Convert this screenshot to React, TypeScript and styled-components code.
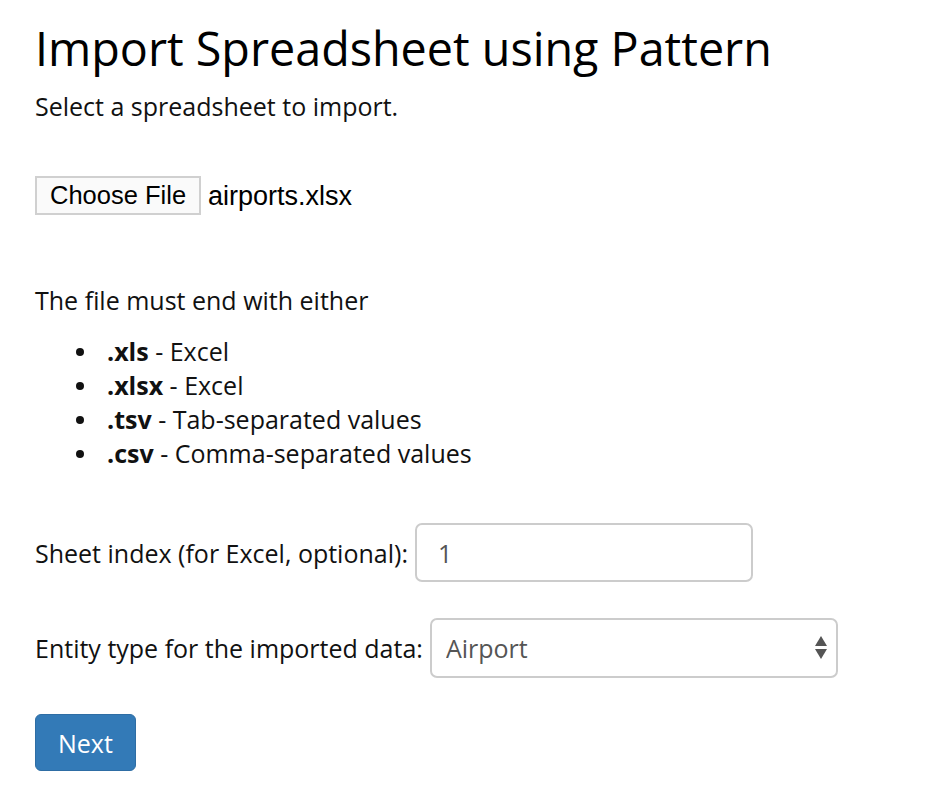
import styled, { createGlobalStyle } from 'styled-components';

const GlobalStyle = createGlobalStyle`
  html, body {
    margin: 0;
    padding: 0;
    background: #fff;
  }
  body {
    font-family: "Open Sans", "Noto Sans", sans-serif;
    font-size: 25px;
    line-height: 34px;
    color: #111;
  }
`;

const extensions = [
  { ext: '.xls', label: 'Excel' },
  { ext: '.xlsx', label: 'Excel' },
  { ext: '.tsv', label: 'Tab-separated values' },
  { ext: '.csv', label: 'Comma-separated values' },
];

const App = () => {
  return (
    <Page>
      <GlobalStyle />
      <Title>Import Spreadsheet using Pattern</Title>
      <Lead>Select a spreadsheet to import.</Lead>

      <FilePicker>
        <ChooseButton type="button">Choose File</ChooseButton>
        <FileName>airports.xlsx</FileName>
      </FilePicker>

      <Lead>The file must end with either</Lead>
      <ExtList>
        {extensions.map((item) => (
          <li key={item.ext}>
            <b>{item.ext}</b> - {item.label}
          </li>
        ))}
      </ExtList>

      <FormRow>
        <Label htmlFor="sheet">Sheet index (for Excel, optional):</Label>
        <TextInput id="sheet" defaultValue="1" />
      </FormRow>

      <FormRow>
        <Label htmlFor="entity">Entity type for the imported data:</Label>
        <SelectWrap>
          <Select id="entity" defaultValue="Airport">
            <option>Airport</option>
          </Select>
          <Arrows viewBox="0 0 12 24" aria-hidden="true">
            <path d="M6 0 L12 10 L0 10 Z" />
            <path d="M0 13 L12 13 L6 23 Z" />
          </Arrows>
        </SelectWrap>
      </FormRow>

      <PrimaryButton type="button">Next</PrimaryButton>
    </Page>
  );
};

const Page = styled.div`
  padding: 23px 35px 40px;
`;

const Title = styled.h1`
  margin: 0 0 16px;
  font-size: 46.7px;
  line-height: 50px;
  font-weight: 400;
  color: #000;
`;

const Lead = styled.p`
  margin: 0 0 17px;
`;

const FilePicker = styled.div`
  display: flex;
  align-items: center;
  gap: 7px;
  margin: 53px 0 68px;
`;

const ChooseButton = styled.button`
  font-family: "Liberation Sans", Arial, sans-serif;
  font-size: 25.5px;
  height: 39px;
  padding: 0 13px;
  color: #000;
  background: #fafafa;
  border: 2px solid #d0d0d0;
  border-radius: 0;
`;

const FileName = styled.span`
  font-family: "Liberation Sans", Arial, sans-serif;
  font-size: 27px;
  color: #000;
`;

const ExtList = styled.ul`
  margin: 0 0 53px;
  padding-left: 72px;
  list-style: none;
  li {
    position: relative;
  }
  li::before {
    content: "";
    position: absolute;
    left: -31px;
    top: 14px;
    width: 8px;
    height: 8px;
    border-radius: 50%;
    background: #111;
  }
  b {
    font-weight: 700;
  }
`;

const FormRow = styled.div`
  display: flex;
  align-items: center;
  gap: 7px;
  margin-bottom: 36px;
`;

const Label = styled.label`
  font-weight: 400;
`;

const TextInput = styled.input`
  box-sizing: border-box;
  width: 338px;
  height: 59px;
  padding: 0 21px;
  font-family: "Open Sans", sans-serif;
  font-size: 25px;
  color: #555;
  background: #fff;
  border: 2px solid #ccc;
  border-radius: 7px;
  outline: none;
`;

const SelectWrap = styled.div`
  position: relative;
  width: 408px;
  height: 60px;
`;

const Select = styled.select`
  box-sizing: border-box;
  width: 100%;
  height: 100%;
  padding: 0 14px;
  appearance: none;
  font-family: "Open Sans", sans-serif;
  font-size: 25px;
  color: #555;
  background: #fff;
  border: 2px solid #ccc;
  border-radius: 7px;
  outline: none;
`;

const Arrows = styled.svg`
  position: absolute;
  right: 11px;
  top: 18px;
  width: 12px;
  height: 24px;
  fill: #555;
  pointer-events: none;
`;

const PrimaryButton = styled.button`
  height: 57px;
  padding: 0 22px;
  font-family: "Open Sans", sans-serif;
  font-size: 25px;
  color: #fff;
  background: #337ab7;
  border: 1px solid #2e6da4;
  border-radius: 6px;
`;

export default App;
